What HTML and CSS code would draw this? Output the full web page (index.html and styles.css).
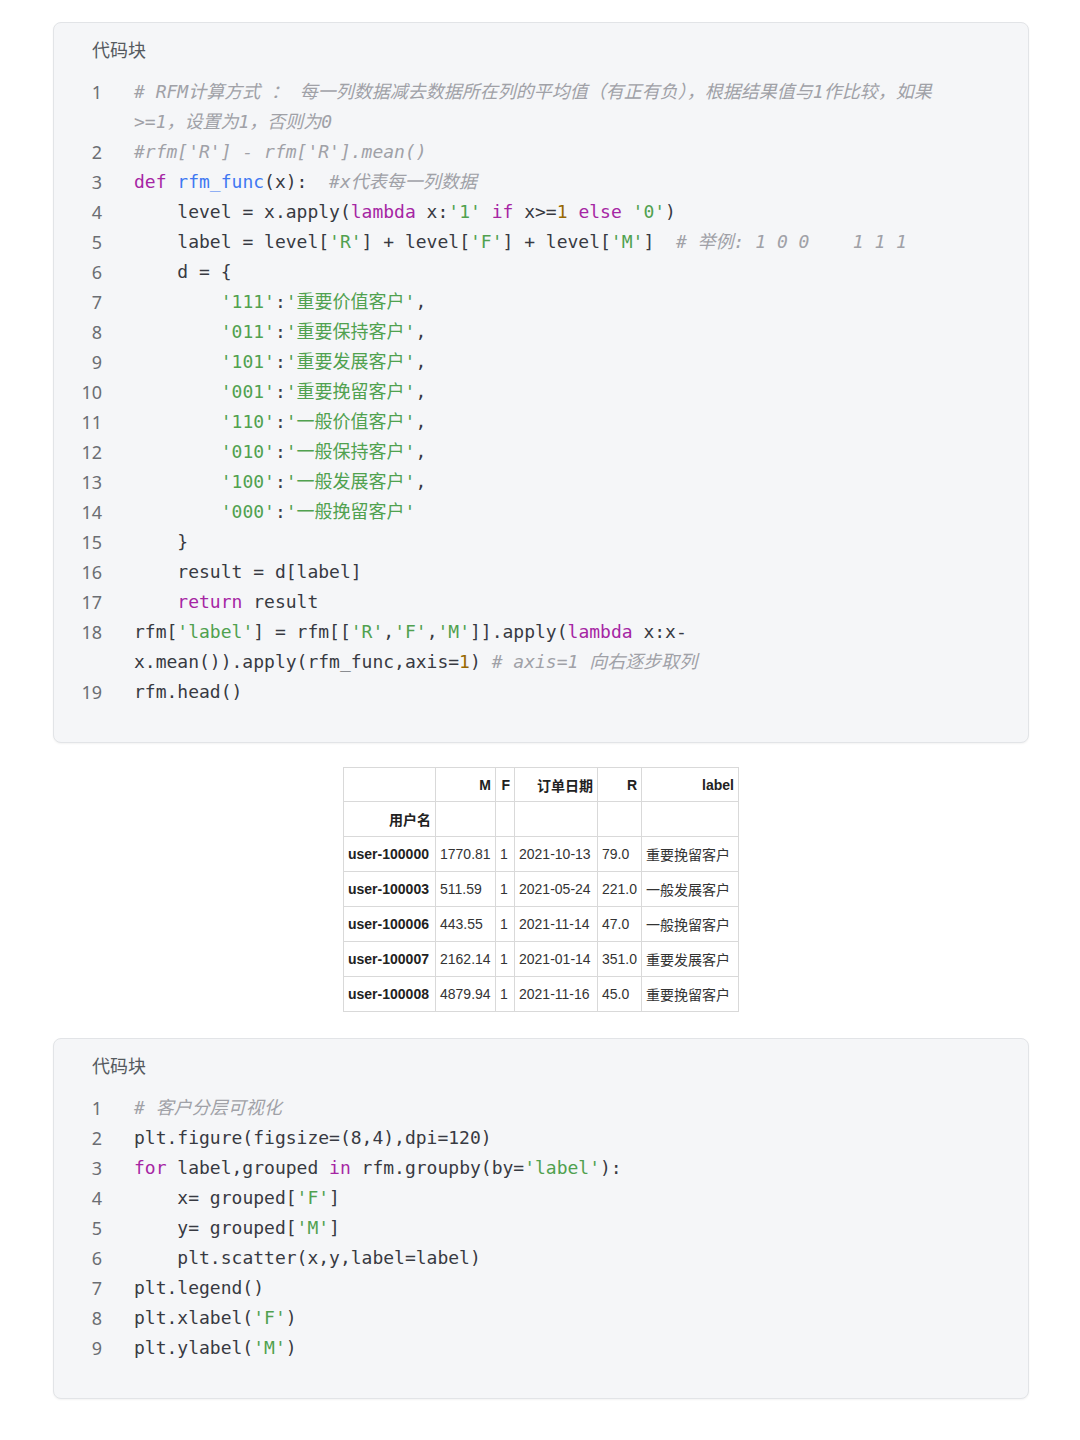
FILE: index.html
```html
<!DOCTYPE html>
<html lang="zh-CN">
<head>
<meta charset="utf-8">
<title>代码块</title>
<link rel="stylesheet" href="styles.css">
</head>
<body>
<div class="page">
  <section class="card">
    <div class="card-title">代码块</div>
    <div class="code">
      <div class="ln"><span class="no">1</span><span class="src"><span class="cm"># RFM计算方式 ： 每一列数据减去数据所在列的平均值（有正有负），根据结果值与1作比较，如果>=1，设置为1，否则为0</span></span></div>
      <div class="ln"><span class="no">2</span><span class="src"><span class="cm">#rfm['R'] - rfm['R'].mean()</span></span></div>
      <div class="ln"><span class="no">3</span><span class="src"><span class="kw">def</span> <span class="fn">rfm_func</span>(x):  <span class="cm">#x代表每一列数据</span></span></div>
      <div class="ln"><span class="no">4</span><span class="src">    level = x.apply(<span class="kw">lambda</span> x:<span class="str">'1'</span> <span class="kw">if</span> x>=<span class="num">1</span> <span class="kw">else</span> <span class="str">'0'</span>)</span></div>
      <div class="ln"><span class="no">5</span><span class="src">    label = level[<span class="str">'R'</span>] + level[<span class="str">'F'</span>] + level[<span class="str">'M'</span>]  <span class="cm"># 举例: 1 0 0    1 1 1</span></span></div>
      <div class="ln"><span class="no">6</span><span class="src">    d = {</span></div>
      <div class="ln"><span class="no">7</span><span class="src">        <span class="str">'111'</span>:<span class="str">'重要价值客户'</span>,</span></div>
      <div class="ln"><span class="no">8</span><span class="src">        <span class="str">'011'</span>:<span class="str">'重要保持客户'</span>,</span></div>
      <div class="ln"><span class="no">9</span><span class="src">        <span class="str">'101'</span>:<span class="str">'重要发展客户'</span>,</span></div>
      <div class="ln"><span class="no">10</span><span class="src">        <span class="str">'001'</span>:<span class="str">'重要挽留客户'</span>,</span></div>
      <div class="ln"><span class="no">11</span><span class="src">        <span class="str">'110'</span>:<span class="str">'一般价值客户'</span>,</span></div>
      <div class="ln"><span class="no">12</span><span class="src">        <span class="str">'010'</span>:<span class="str">'一般保持客户'</span>,</span></div>
      <div class="ln"><span class="no">13</span><span class="src">        <span class="str">'100'</span>:<span class="str">'一般发展客户'</span>,</span></div>
      <div class="ln"><span class="no">14</span><span class="src">        <span class="str">'000'</span>:<span class="str">'一般挽留客户'</span></span></div>
      <div class="ln"><span class="no">15</span><span class="src">    }</span></div>
      <div class="ln"><span class="no">16</span><span class="src">    result = d[label]</span></div>
      <div class="ln"><span class="no">17</span><span class="src">    <span class="kw">return</span> result</span></div>
      <div class="ln"><span class="no">18</span><span class="src">rfm[<span class="str">'label'</span>] = rfm[[<span class="str">'R'</span>,<span class="str">'F'</span>,<span class="str">'M'</span>]].apply(<span class="kw">lambda</span> x:x-x.mean()).apply(rfm_func,axis=<span class="num">1</span>) <span class="cm"># axis=1 向右逐步取列</span></span></div>
      <div class="ln"><span class="no">19</span><span class="src">rfm.head()</span></div>
    </div>
  </section>

  <div class="table-wrap">
    <table class="df">
      <colgroup>
        <col class="c-idx"><col class="c-m"><col class="c-f"><col class="c-date"><col class="c-r"><col class="c-label">
      </colgroup>
      <thead>
        <tr><th></th><th>M</th><th>F</th><th>订单日期</th><th>R</th><th>label</th></tr>
        <tr><th>用户名</th><th></th><th></th><th></th><th></th><th></th></tr>
      </thead>
      <tbody>
        <tr><th>user-100000</th><td>1770.81</td><td>1</td><td>2021-10-13</td><td>79.0</td><td>重要挽留客户</td></tr>
        <tr><th>user-100003</th><td>511.59</td><td>1</td><td>2021-05-24</td><td>221.0</td><td>一般发展客户</td></tr>
        <tr><th>user-100006</th><td>443.55</td><td>1</td><td>2021-11-14</td><td>47.0</td><td>一般挽留客户</td></tr>
        <tr><th>user-100007</th><td>2162.14</td><td>1</td><td>2021-01-14</td><td>351.0</td><td>重要发展客户</td></tr>
        <tr><th>user-100008</th><td>4879.94</td><td>1</td><td>2021-11-16</td><td>45.0</td><td>重要挽留客户</td></tr>
      </tbody>
    </table>
  </div>

  <section class="card">
    <div class="card-title">代码块</div>
    <div class="code">
      <div class="ln"><span class="no">1</span><span class="src"><span class="cm"># 客户分层可视化</span></span></div>
      <div class="ln"><span class="no">2</span><span class="src">plt.figure(figsize=(8,4),dpi=120)</span></div>
      <div class="ln"><span class="no">3</span><span class="src"><span class="kw">for</span> label,grouped <span class="kw">in</span> rfm.groupby(by=<span class="str">'label'</span>):</span></div>
      <div class="ln"><span class="no">4</span><span class="src">    x= grouped[<span class="str">'F'</span>]</span></div>
      <div class="ln"><span class="no">5</span><span class="src">    y= grouped[<span class="str">'M'</span>]</span></div>
      <div class="ln"><span class="no">6</span><span class="src">    plt.scatter(x,y,label=label)</span></div>
      <div class="ln"><span class="no">7</span><span class="src">plt.legend()</span></div>
      <div class="ln"><span class="no">8</span><span class="src">plt.xlabel(<span class="str">'F'</span>)</span></div>
      <div class="ln"><span class="no">9</span><span class="src">plt.ylabel(<span class="str">'M'</span>)</span></div>
    </div>
  </section>
</div>
</body>
</html>
```

FILE: styles.css
```css
html, body {
  margin: 0;
  padding: 0;
  background: #ffffff;
}

.page {
  padding: 22px 51px 40px 53px;
  display: flex;
  flex-direction: column;
  gap: 24px;
  font-family: "Noto Sans", "Noto Sans CJK SC", sans-serif;
}

.card {
  box-sizing: border-box;
  width: 976px;
  background: #f5f6f8;
  border: 1px solid #e2e4e7;
  border-radius: 8px;
  box-shadow: 0 1px 2px rgba(0, 0, 0, 0.05);
  padding: 11px 0 35px 0;
}

.card-title {
  padding-left: 38px;
  height: 30px;
  line-height: 30px;
  font-size: 18px;
  color: #555a60;
  font-family: "Noto Sans CJK SC", sans-serif;
  margin-bottom: 13px;
}

.code {
  display: flex;
  flex-direction: column;
}

.ln {
  display: grid;
  grid-template-columns: 48px 840px;
  column-gap: 32px;
  line-height: 30px;
}

.no {
  text-align: right;
  font-family: "Noto Sans", sans-serif;
  font-size: 18px;
  color: #6b6e73;
}

.src {
  font-family: "DejaVu Sans Mono", "Noto Sans CJK SC", monospace;
  font-size: 18px;
  color: #383a42;
  white-space: pre-wrap;
  word-break: normal;
}

.kw { color: #a626a4; }
.fn { color: #4078f2; }
.str { color: #50a14f; }
.num { color: #986801; }
.cm { color: #a0a1a7; font-style: italic; }

.table-wrap {
  display: flex;
  justify-content: center;
  width: 976px;
  margin-bottom: 2px;
}

.df {
  border-collapse: collapse;
  table-layout: fixed;
  width: 395px;
  font-family: "Liberation Sans", "Noto Sans CJK SC", sans-serif;
  font-size: 14px;
  color: #333333;
}

.c-idx { width: 92px; }
.c-m { width: 60px; }
.c-f { width: 19px; }
.c-date { width: 83px; }
.c-r { width: 44px; }
.c-label { width: 97px; }

.df th, .df td {
  border: 1px solid #d9d9d9;
  padding: 0 4px;
  height: 34px;
  white-space: nowrap;
  overflow: hidden;
}

.df thead tr:first-child th {
  height: 33px;
}

.df thead th {
  text-align: right;
  font-weight: bold;
  color: #222222;
}

.df tbody th {
  text-align: left;
  font-weight: bold;
  color: #222222;
}

.df td {
  text-align: left;
}
```
